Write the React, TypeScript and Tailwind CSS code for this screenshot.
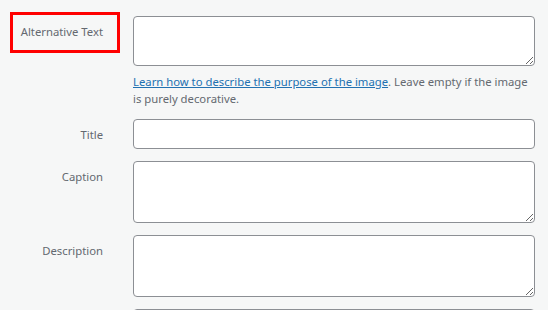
// App.tsx — attachment details form (alt text, title, caption, description).

function Row({ label, children, highlight }: { label: string; children: React.ReactNode; highlight?: boolean }) {
  return (
    <div className="relative flex">
      {highlight && (
        <div className="pointer-events-none absolute left-[10px] top-[-4px] h-[41px] w-[110px] border-[3px] border-[#ff0000]" />
      )}
      <label className="w-[103px] shrink-0 pt-[7px] text-right text-[11.3px] leading-[18px] text-[#646970]">{label}</label>
      <div className="ml-[30px] w-[402px]">{children}</div>
    </div>
  );
}

const field = 'block w-full rounded-[4px] border border-[#8c8f94] bg-white px-2 text-[13px] outline-none';

export default function App() {
  return (
    <div className="h-[310px] overflow-hidden bg-[#f6f7f7] pt-[16px] font-['Segoe_UI','Noto_Sans',sans-serif]">
      <div className="flex flex-col gap-[12px]">
        <Row label="Alternative Text" highlight>
          <textarea className={`${field} h-[50px]`} />
          <p className="mt-[7px] text-[11.3px] leading-[17px] text-[#646970]">
            <a href="#" className="text-[#2271b1] underline">Learn how to describe the purpose of the image</a>. Leave empty if the image is purely decorative.
          </p>
        </Row>
        <Row label="Title">
          <input className={`${field} h-[30px]`} />
        </Row>
        <Row label="Caption">
          <textarea className={`${field} h-[62px]`} />
        </Row>
        <Row label="Description">
          <textarea className={`${field} h-[62px]`} />
        </Row>
        <Row label="">
          <input className={`${field} h-[30px]`} />
        </Row>
      </div>
    </div>
  );
}
